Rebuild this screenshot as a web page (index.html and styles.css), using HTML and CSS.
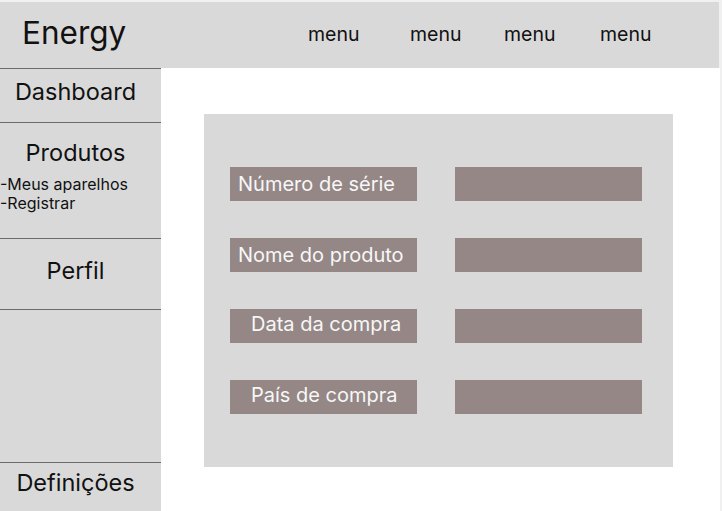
FILE: index.html
```html
<!DOCTYPE html>
<html lang="pt">
<head>
<meta charset="utf-8">
<title>Energy</title>
<link rel="stylesheet" href="styles.css">
</head>
<body>
<div class="page">
  <header class="topbar">
    <div class="brand">Energy</div>
    <nav class="nav">
      <span class="nav-item">menu</span>
      <span class="nav-item">menu</span>
      <span class="nav-item">menu</span>
      <span class="nav-item">menu</span>
    </nav>
  </header>
  <div class="body">
    <aside class="sidebar">
      <div class="side-sec sec-dash"><span class="side-title">Dashboard</span></div>
      <div class="side-sec sec-prod">
        <span class="side-title">Produtos</span>
        <ul class="sub">
          <li>-Meus aparelhos</li>
          <li>-Registrar</li>
        </ul>
      </div>
      <div class="side-sec sec-perfil"><span class="side-title">Perfil</span></div>
      <div class="side-sec sec-empty"></div>
      <div class="side-sec sec-def"><span class="side-title">Definições</span></div>
    </aside>
    <main class="main">
      <section class="panel">
        <div class="fields">
          <div class="label label-left">Número de série</div>
          <div class="input"></div>
          <div class="label label-left">Nome do produto</div>
          <div class="input"></div>
          <div class="label label-indent">Data da compra</div>
          <div class="input"></div>
          <div class="label label-indent">País de compra</div>
          <div class="input"></div>
        </div>
      </section>
    </main>
  </div>
</div>
</body>
</html>
```
FILE: styles.css
```css
* { box-sizing: border-box; }
html, body { margin: 0; padding: 0; }
body {
  background: #ffffff;
  font-family: Inter, "Noto Sans", sans-serif;
  color: #111;
  width: 722px;
  height: 511px;
  overflow: hidden;
}
.page {
  width: 722px;
  height: 511px;
  padding-top: 2px;
  background: #f0f0f0;
  padding-right: 2px;
  display: flex;
  flex-direction: column;
}
.topbar {
  height: 66px;
  background: #d9d9d9;
  display: flex;
  align-items: center;
  padding-left: 22px;
  margin-right: 1px;
}
.brand {
  font-size: 31.5px;
  font-weight: 400;
  width: 286px;
  margin-top: -6px;
}
.nav {
  display: flex;
  font-size: 19.5px;
  margin-top: -2px;
}
.nav-item:nth-child(1) { width: 102px; }
.nav-item:nth-child(2) { width: 94px; }
.nav-item:nth-child(3) { width: 96px; }
.body {
  flex: 1;
  display: flex;
  background: #fff;
}
.sidebar {
  width: 161px;
  background: #d9d9d9;
  display: flex;
  flex-direction: column;
}
.side-sec {
  border-top: 1px solid #6b6b6b;
  display: flex;
  flex-direction: column;
  align-items: center;
  padding-right: 10px;
}
.side-title { font-size: 23.5px; }
.sec-dash { height: 54px; padding-top: 8px; }
.sec-prod { height: 116px; padding-top: 15px; }
.sec-perfil { height: 71px; padding-top: 17px; }
.sec-empty { height: 153px; }
.sec-def { flex: 1; padding-top: 5px; }
.sub {
  list-style: none;
  margin: 8px 0 0;
  padding: 0;
  align-self: stretch;
  font-size: 16px;
  line-height: 19px;
}
.main {
  flex: 1;
  padding: 46px 0 0 43px;
}
.panel {
  width: 469px;
  height: 353px;
  background: #d9d9d9;
  padding: 53px 0 0 26px;
}
.fields {
  display: grid;
  grid-template-columns: 187px 187px;
  grid-auto-rows: 34px;
  column-gap: 38px;
  row-gap: 37px;
}
.label, .input {
  background: #948786;
}
.label {
  color: #f7f7f7;
  font-size: 20px;
  display: flex;
  align-items: center;
}
.label-left { padding-left: 8px; }
.label-indent { padding-left: 21px; padding-bottom: 4px; }
```
